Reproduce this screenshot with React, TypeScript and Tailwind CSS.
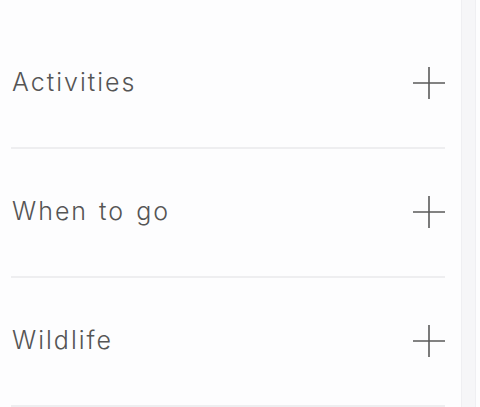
import React from "react";

function Plus() {
  return (
    <svg width="34" height="34" viewBox="0 0 34 34" fill="none">
      <path d="M17 1V33M1 17H33" stroke="#5a5a5a" strokeWidth="1.6" />
    </svg>
  );
}

const items = ["Activities", "When to go", "Wildlife"];

export default function App() {
  return (
    <div className="w-[480px] h-[407px] overflow-hidden bg-[#fdfdfe] flex">
      <div className="w-[461px] pl-[11px] pr-[16px] pt-[20px]">
        {items.map((t) => (
          <div
            key={t}
            className="h-[129px] border-b-2 border-[#eeeef0] flex items-center justify-between"
          >
            <span
              className="text-[25px] text-[#555555] font-light pl-px tracking-[2px] [word-spacing:2px] -mt-[1px]"
              style={{ fontFamily: "Inter, 'Noto Sans', sans-serif" }}
            >
              {t}
            </span>
            <span className="-mr-[1px] -mt-[1px]">
              <Plus />
            </span>
          </div>
        ))}
      </div>
      <div className="w-[15px] h-full bg-[#f6f6f8] border-l border-r border-[#efeff2]" />
      <div className="flex-1 bg-[#fdfdfe]" />
    </div>
  );
}
